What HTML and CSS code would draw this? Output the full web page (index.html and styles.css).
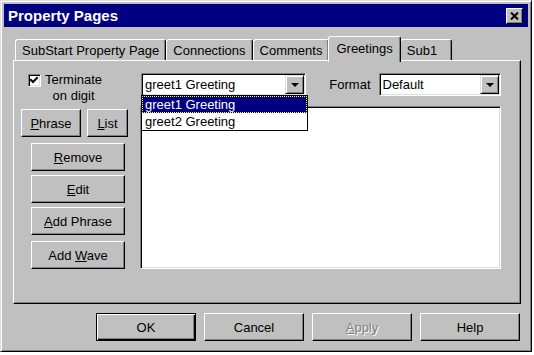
FILE: index.html
```html
<!DOCTYPE html>
<html lang="en">
<head>
    <meta charset="UTF-8">
    <meta name="viewport" content="width=device-width, initial-scale=1.0">
    <title>Property Pages</title>
    <link rel="stylesheet" href="styles.css">
</head>
<body>
    <div class="window">
        <div class="titlebar">
            <span class="title">Property Pages</span>
            <button class="close-btn" aria-label="Close">
                <svg width="9" height="8" viewBox="0 0 9 8">
                    <path d="M1 0.5 L8 7.5 M8 0.5 L1 7.5" stroke="#000" stroke-width="2" fill="none"/>
                </svg>
            </button>
        </div>

        <div class="tabs">
            <div class="tab">SubStart Property Page</div>
            <div class="tab">Connections</div>
            <div class="tab">Comments</div>
            <div class="tab selected">Greetings</div>
            <div class="tab">Sub1</div>
        </div>

        <div class="panel">
            <div class="left-col">
                <div class="check-row">
                    <span class="checkbox">
                        <svg width="9" height="9" viewBox="0 0 9 9">
                            <path d="M1 4 L3 6 L7 2" stroke="#000" stroke-width="2" fill="none" stroke-linecap="square"/>
                        </svg>
                    </span>
                    <span class="check-label">Terminate<br>on digit</span>
                </div>
                <div class="phrase-row">
                    <button class="btn btn-phrase"><u>P</u>hrase</button>
                    <button class="btn btn-list"><u>L</u>ist</button>
                </div>
                <div class="action-stack">
                    <button class="btn"><u>R</u>emove</button>
                    <button class="btn"><u>E</u>dit</button>
                    <button class="btn"><u>A</u>dd Phrase</button>
                    <button class="btn btn-wave">Add <u>W</u>ave</button>
                </div>
            </div>

            <div class="right-col">
                <div class="top-row">
                    <div class="combo combo-greeting">
                        <span class="combo-text">greet1 Greeting</span>
                        <span class="combo-arrow"><span class="tri"></span></span>
                        <ul class="dropdown">
                            <li class="active">greet1 Greeting</li>
                            <li>greet2 Greeting</li>
                        </ul>
                    </div>
                    <span class="format-label">Format</span>
                    <div class="combo combo-format">
                        <span class="combo-text">Default</span>
                        <span class="combo-arrow"><span class="tri"></span></span>
                    </div>
                </div>
                <div class="listbox"></div>
            </div>
        </div>

        <div class="footer">
            <button class="btn btn-default">OK</button>
            <button class="btn">Cancel</button>
            <button class="btn disabled"><u>A</u>pply</button>
            <button class="btn">Help</button>
        </div>
    </div>
</body>
</html>
```

FILE: styles.css
```css
* {
    box-sizing: border-box;
}
body {
    margin: 0;
    background-color: white;
    font-family: "Liberation Sans", Arial, sans-serif;
    font-size: 13px;
    color: black;
}
.window {
    width: 532px;
    height: 352px;
    background-color: #c0c0c0;
    border: 1px solid;
    border-color: #dfdfdf #000 #000 #dfdfdf;
    box-shadow: inset 1px 1px #fff, inset -1px -1px #808080;
    padding: 3px;
}
.titlebar {
    height: 23px;
    background-color: #000080;
    display: flex;
    align-items: center;
    justify-content: space-between;
    padding: 0 5px 0 4px;
}
.title {
    color: white;
    font-weight: bold;
    font-size: 15px;
}
.close-btn {
    width: 17px;
    height: 16px;
    padding: 0;
    background-color: #c0c0c0;
    border: 1px solid;
    border-color: #fff #000 #000 #fff;
    box-shadow: inset -1px -1px #808080;
    display: flex;
    align-items: center;
    justify-content: center;
}

/* tab strip */
.tabs {
    height: 33px;
    display: flex;
    align-items: flex-end;
    padding-left: 11px;
}
.tab {
    min-width: 52px;
    height: 21px;
    padding: 3px 6px 0;
    line-height: 15px;
    background-color: #c0c0c0;
    border: 1px solid;
    border-bottom: none;
    border-color: #fff #000 transparent #fff;
    border-radius: 3px 3px 0 0;
    box-shadow: inset -1px 0 #808080;
    white-space: nowrap;
}
.tab.selected {
    height: 26px;
    margin: 0 -1px -2px;
    padding: 4px 7px 0;
    position: relative;
    z-index: 1;
}

.panel {
    margin-left: 9px;
    width: 508px;
    height: 244px;
    border: 1px solid;
    border-color: #fff #000 #000 #fff;
    box-shadow: inset -1px -1px #808080;
    display: flex;
    padding: 12px 0 0 7px;
}

/* buttons */
.btn {
    height: 28px;
    padding: 0;
    font-family: inherit;
    font-size: 13px;
    color: black;
    background-color: #c0c0c0;
    border: 1px solid;
    border-color: #fff #000 #000 #fff;
    box-shadow: inset -1px -1px #808080;
}
.btn u {
    text-decoration-thickness: 1px;
}
.btn-default {
    border-color: #000;
    box-shadow: inset 1px 1px #fff, inset -1px -1px #000, inset -2px -2px #808080;
}
.btn.disabled {
    color: #808080;
    text-shadow: 1px 1px #fff;
}

.left-col {
    width: 119px;
    display: flex;
    flex-direction: column;
}
.check-row {
    height: 30px;
    display: flex;
    align-items: flex-start;
}
.checkbox {
    width: 13px;
    height: 13px;
    margin: 1px 0 0 7px;
    background-color: white;
    border: 1px solid;
    border-color: #808080 #fff #fff #808080;
    box-shadow: inset 1px 1px #000, inset -1px -1px #dfdfdf;
    display: flex;
    align-items: center;
    justify-content: center;
}
.check-label {
    margin: -1px 0 0 4px;
    text-align: center;
    line-height: 16px;
}
.phrase-row {
    margin-top: 6px;
    display: flex;
    gap: 6px;
}
.btn-phrase {
    width: 60px;
}
.btn-list {
    width: 41px;
}
.action-stack {
    margin: 6px 0 0 10px;
    display: flex;
    flex-direction: column;
    gap: 4px;
}
.action-stack .btn {
    width: 94px;
}
.action-stack .btn-wave {
    margin-top: 2px;
}

.right-col {
    width: 361px;
    display: flex;
    flex-direction: column;
}
.top-row {
    height: 23px;
    display: flex;
    align-items: center;
}
.combo {
    height: 23px;
    position: relative;
    background-color: white;
    border: 1px solid;
    border-color: #808080 #fff #fff #808080;
    box-shadow: inset 1px 1px #000, inset -1px -1px #dfdfdf;
    display: flex;
    align-items: center;
    padding: 2px 1px 2px 3px;
}
.combo-greeting {
    width: 166px;
    margin-left: 1px;
}
.combo-format {
    width: 123px;
}
.combo-text {
    flex: 1;
    line-height: 19px;
}
.combo-arrow {
    width: 19px;
    height: 19px;
    background-color: #c0c0c0;
    border: 1px solid;
    border-color: #dfdfdf #000 #000 #dfdfdf;
    box-shadow: inset 1px 1px #fff, inset -1px -1px #808080;
    display: flex;
    align-items: center;
    justify-content: center;
}
.tri {
    width: 0;
    height: 0;
    border-left: 4px solid transparent;
    border-right: 4px solid transparent;
    border-top: 4px solid #000;
}
.format-label {
    margin: 0 8px 0 23px;
}
.dropdown {
    position: absolute;
    top: 100%;
    left: -1px;
    width: 167px;
    margin: 0;
    padding: 0;
    list-style: none;
    background-color: white;
    border: 1px solid #000;
    z-index: 2;
}
.dropdown li {
    height: 17px;
    line-height: 17px;
    padding-left: 3px;
}
.dropdown li.active {
    background-color: #000080;
    color: white;
    outline: 1px dotted #ffff00;
    outline-offset: -1px;
}
.listbox {
    margin-top: 10px;
    width: 361px;
    height: 163px;
    background-color: white;
    border: 1px solid;
    border-color: #808080 #fff #fff #808080;
    box-shadow: inset 1px 1px #000, inset -1px -1px #dfdfdf;
}

.footer {
    margin-top: 9px;
    display: flex;
    justify-content: flex-end;
    gap: 8px;
    padding-right: 8px;
}
.footer .btn {
    width: 100px;
}
```
